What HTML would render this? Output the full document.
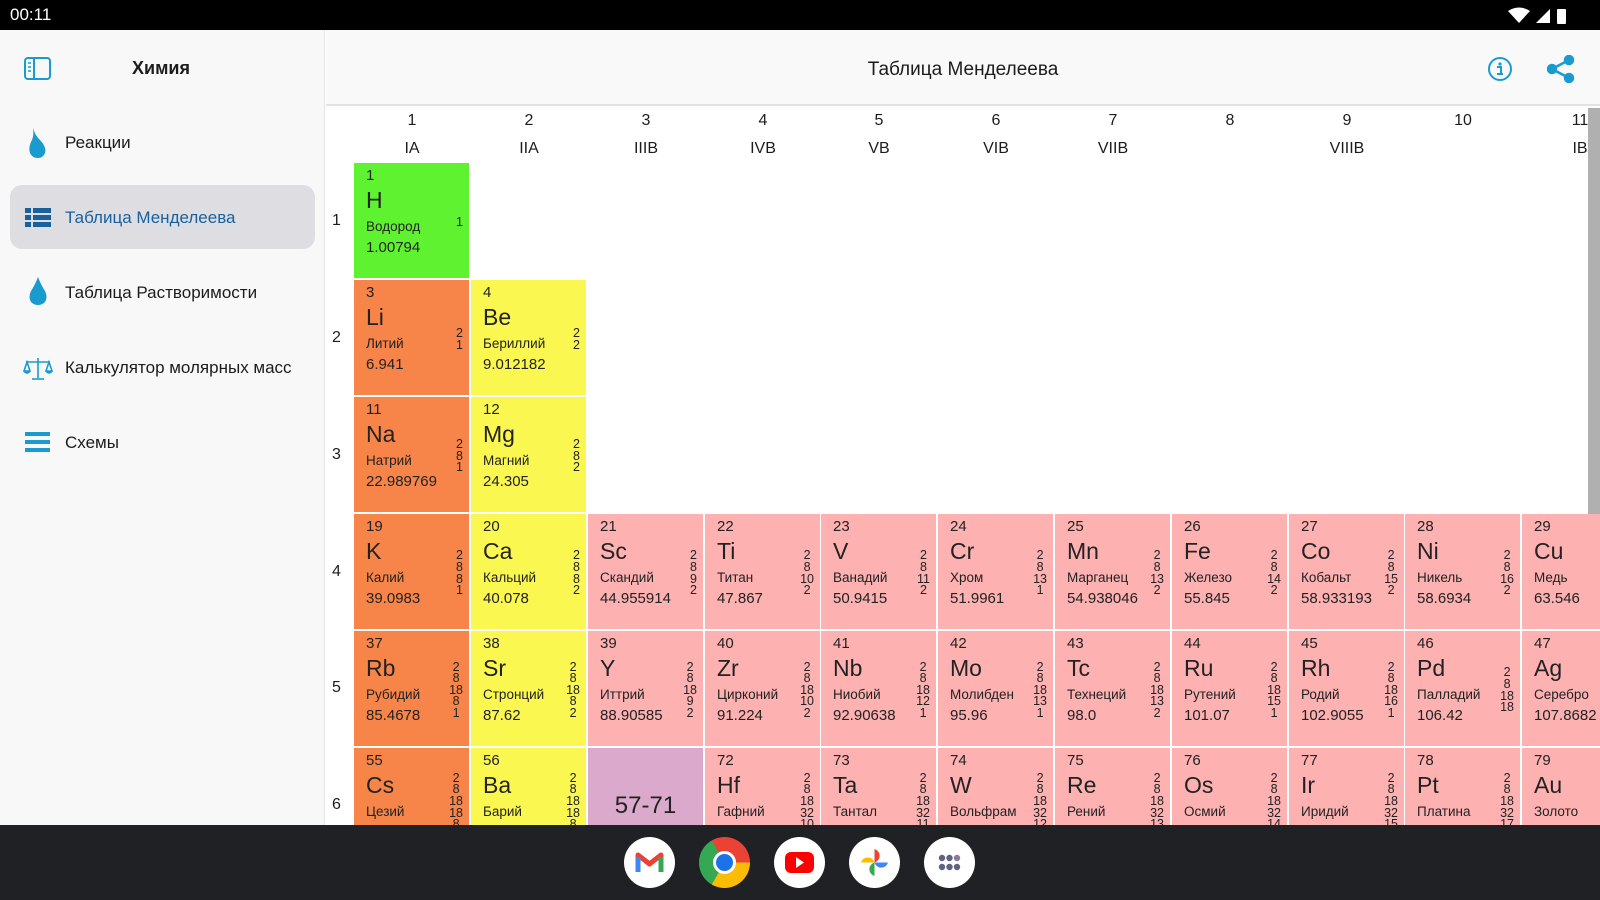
<!DOCTYPE html>
<html><head><meta charset="utf-8"><style>
*{margin:0;padding:0;box-sizing:border-box}
body{width:1600px;height:900px;position:relative;overflow:hidden;background:#fff;font-family:"Liberation Sans","DejaVu Sans",sans-serif;color:#1c1c1c}
.sb{position:absolute;top:0;left:0;width:1600px;height:30px;background:#000;color:#fff;font-size:17px}
.side{position:absolute;left:0;top:30px;width:325px;height:795px;background:#f8f8f8;border-right:1px solid #e4e4e4}
.top{position:absolute;left:326px;top:30px;width:1274px;height:76px;background:#f9f9f9;border-bottom:2px solid #e2e2e2}
.mi{position:absolute;left:65px;font-size:17px;color:#1c1c1c}
.main{position:absolute;left:326px;top:108px;width:1274px;height:717px;overflow:hidden;background:#fff}
.c{position:absolute;width:115px;height:115px;color:#222}
.c .n{position:absolute;left:12px;top:4px;font-size:15px}
.c .s{position:absolute;left:12px;top:24px;font-size:23px}
.c .m{position:absolute;left:12px;top:56px;font-size:13.5px}
.c .w{position:absolute;left:12px;top:76px;font-size:15px}
.c .e{position:absolute;right:6px;top:0;bottom:0;display:flex;flex-direction:column;justify-content:center;text-align:center;font-size:12.5px;line-height:11.6px;padding-top:4px}
.a{background:#f7854a}.b{background:#fbf751}.t{background:#fdb1b1}
.h{position:absolute;font-size:16px;text-align:center;width:116px}
.r{position:absolute;left:6px;font-size:16px}
.nav{position:absolute;left:0;top:825px;width:1600px;height:75px;background:#202124}
.ic{position:absolute;top:837px;width:51px;height:51px;border-radius:50%;background:#fff}
</style></head><body>
<div class="sb"><span style="position:absolute;left:10px;top:5px">00:11</span>
<svg style="position:absolute;left:1508px;top:7px" width="60" height="17"><path d="M0 4 Q11 -3 22 4 L11 16Z" fill="#fff"/><path d="M28 16 L42 2 L42 16Z" fill="#fff"/><rect x="49" y="2" width="9" height="15" rx="1" fill="#fff"/></svg></div>
<div class="side">
<svg style="position:absolute;left:24px;top:27px" width="27" height="23"><rect x="1" y="1" width="25" height="21" rx="3" fill="none" stroke="#1a9bd0" stroke-width="2"/><line x1="10" y1="1" x2="10" y2="22" stroke="#1a9bd0" stroke-width="2"/><line x1="4" y1="6" x2="7" y2="6" stroke="#1a9bd0" stroke-width="1.5"/><line x1="4" y1="10" x2="7" y2="10" stroke="#1a9bd0" stroke-width="1.5"/><line x1="4" y1="14" x2="7" y2="14" stroke="#1a9bd0" stroke-width="1.5"/></svg>
<div style="position:absolute;left:132px;top:28px;font-size:18px;font-weight:bold;color:#1c1c1c">Химия</div>
<svg style="position:absolute;left:27px;top:97px" width="22" height="32"><path d="M6 1 Q8 8 12 12 Q20 20 18 26 Q16 31 11 31 Q5 31 3 26 Q1 20 5 13 Q7 8 6 1Z" fill="#1a9bd0"/></svg>
<div class="mi" style="top:103px">Реакции</div>
<div style="position:absolute;left:10px;top:155px;width:305px;height:64px;background:#dedee2;border-radius:12px"></div>
<svg style="position:absolute;left:25px;top:178px" width="26" height="19" fill="#19609c"><rect x="0" y="0" width="6" height="5"/><rect x="8" y="0" width="18" height="5"/><rect x="0" y="7" width="6" height="5"/><rect x="8" y="7" width="18" height="5"/><rect x="0" y="14" width="6" height="5"/><rect x="8" y="14" width="18" height="5"/></svg>
<div class="mi" style="top:178px;color:#19609c">Таблица Менделеева</div>
<svg style="position:absolute;left:27px;top:246px" width="22" height="30"><path d="M11 1 Q14 9 18 15 Q21 21 18 26 Q15 29 11 29 Q7 29 4 26 Q1 21 4 15 Q8 9 11 1Z" fill="#1a9bd0"/></svg>
<div class="mi" style="top:253px">Таблица Растворимости</div>
<svg style="position:absolute;left:23px;top:327px" width="30" height="24" stroke="#1a9bd0" fill="none" stroke-width="1.6"><line x1="15" y1="1" x2="15" y2="21"/><line x1="3" y1="5" x2="27" y2="5"/><path d="M9 22 H21"/><path d="M1 14 L4 5 L7 14Z M23 14 L26 5 L29 14Z"/><path d="M1 14 Q4 18 7 14 M23 14 Q26 18 29 14" fill="#1a9bd0"/></svg>
<div class="mi" style="top:328px">Калькулятор молярных масс</div>
<svg style="position:absolute;left:25px;top:402px" width="25" height="21" fill="#1a9bd0"><rect y="0" width="25" height="4"/><rect y="8" width="25" height="4"/><rect y="16" width="25" height="4"/></svg>
<div class="mi" style="top:403px">Схемы</div>
</div>
<div class="top">
<div style="position:absolute;left:0;width:1274px;top:29px;text-align:center;font-size:19px;color:#1c1c1c">Таблица Менделеева</div>
<svg style="position:absolute;left:1161px;top:26px" width="26" height="26"><circle cx="13" cy="13" r="11" fill="none" stroke="#1a9bd0" stroke-width="2"/><circle cx="13" cy="8" r="1.6" fill="#1a9bd0"/><path d="M10 11 H14 V18 M10 18 H16" stroke="#1a9bd0" stroke-width="2" fill="none"/></svg>
<svg style="position:absolute;left:1221px;top:25px" width="28" height="28" fill="#1a9bd0" stroke="#1a9bd0" stroke-width="2.5"><line x1="5" y1="14" x2="22" y2="5"/><line x1="5" y1="14" x2="22" y2="23"/><circle cx="5" cy="14" r="4"/><circle cx="22" cy="5" r="4"/><circle cx="22" cy="23" r="4"/></svg>
</div>
<div class="main">
<div style="position:absolute;right:0;top:0;width:12px;height:420px;background:#b0b0b0"></div>
<div class="h" style="left:28px;top:4px">1</div><div class="h" style="left:28px;top:32px">IA</div>
<div class="h" style="left:145px;top:4px">2</div><div class="h" style="left:145px;top:32px">IIA</div>
<div class="h" style="left:262px;top:4px">3</div><div class="h" style="left:262px;top:32px">IIIB</div>
<div class="h" style="left:379px;top:4px">4</div><div class="h" style="left:379px;top:32px">IVB</div>
<div class="h" style="left:495px;top:4px">5</div><div class="h" style="left:495px;top:32px">VB</div>
<div class="h" style="left:612px;top:4px">6</div><div class="h" style="left:612px;top:32px">VIB</div>
<div class="h" style="left:729px;top:4px">7</div><div class="h" style="left:729px;top:32px">VIIB</div>
<div class="h" style="left:846px;top:4px">8</div>
<div class="h" style="left:963px;top:4px">9</div><div class="h" style="left:963px;top:32px">VIIIB</div>
<div class="h" style="left:1079px;top:4px">10</div>
<div class="h" style="left:1196px;top:4px">11</div><div class="h" style="left:1196px;top:32px">IB</div>
<div class="r" style="top:104px">1</div><div class="r" style="top:221px">2</div><div class="r" style="top:338px">3</div><div class="r" style="top:455px">4</div><div class="r" style="top:571px">5</div><div class="r" style="top:688px">6</div>

<div class="c" style="left:28px;top:55px;background:#5ef230"><span class="n">1</span><span class="s">H</span><span class="m">Водород</span><span class="w">1.00794</span><span class="e">1</span></div>

<div class="c a" style="left:28px;top:172px"><span class="n">3</span><span class="s">Li</span><span class="m">Литий</span><span class="w">6.941</span><span class="e">2<br>1</span></div>
<div class="c b" style="left:145px;top:172px"><span class="n">4</span><span class="s">Be</span><span class="m">Бериллий</span><span class="w">9.012182</span><span class="e">2<br>2</span></div>

<div class="c a" style="left:28px;top:289px"><span class="n">11</span><span class="s">Na</span><span class="m">Натрий</span><span class="w">22.989769</span><span class="e">2<br>8<br>1</span></div>
<div class="c b" style="left:145px;top:289px"><span class="n">12</span><span class="s">Mg</span><span class="m">Магний</span><span class="w">24.305</span><span class="e">2<br>8<br>2</span></div>

<div class="c a" style="left:28px;top:406px"><span class="n">19</span><span class="s">K</span><span class="m">Калий</span><span class="w">39.0983</span><span class="e">2<br>8<br>8<br>1</span></div>
<div class="c b" style="left:145px;top:406px"><span class="n">20</span><span class="s">Ca</span><span class="m">Кальций</span><span class="w">40.078</span><span class="e">2<br>8<br>8<br>2</span></div>
<div class="c t" style="left:262px;top:406px"><span class="n">21</span><span class="s">Sc</span><span class="m">Скандий</span><span class="w">44.955914</span><span class="e">2<br>8<br>9<br>2</span></div>
<div class="c t" style="left:379px;top:406px"><span class="n">22</span><span class="s">Ti</span><span class="m">Титан</span><span class="w">47.867</span><span class="e">2<br>8<br>10<br>2</span></div>
<div class="c t" style="left:495px;top:406px"><span class="n">23</span><span class="s">V</span><span class="m">Ванадий</span><span class="w">50.9415</span><span class="e">2<br>8<br>11<br>2</span></div>
<div class="c t" style="left:612px;top:406px"><span class="n">24</span><span class="s">Cr</span><span class="m">Хром</span><span class="w">51.9961</span><span class="e">2<br>8<br>13<br>1</span></div>
<div class="c t" style="left:729px;top:406px"><span class="n">25</span><span class="s">Mn</span><span class="m">Марганец</span><span class="w">54.938046</span><span class="e">2<br>8<br>13<br>2</span></div>
<div class="c t" style="left:846px;top:406px"><span class="n">26</span><span class="s">Fe</span><span class="m">Железо</span><span class="w">55.845</span><span class="e">2<br>8<br>14<br>2</span></div>
<div class="c t" style="left:963px;top:406px"><span class="n">27</span><span class="s">Co</span><span class="m">Кобальт</span><span class="w">58.933193</span><span class="e">2<br>8<br>15<br>2</span></div>
<div class="c t" style="left:1079px;top:406px"><span class="n">28</span><span class="s">Ni</span><span class="m">Никель</span><span class="w">58.6934</span><span class="e">2<br>8<br>16<br>2</span></div>
<div class="c t" style="left:1196px;top:406px"><span class="n">29</span><span class="s">Cu</span><span class="m">Медь</span><span class="w">63.546</span><span class="e">2<br>8<br>18<br>1</span></div>

<div class="c a" style="left:28px;top:523px"><span class="n">37</span><span class="s">Rb</span><span class="m">Рубидий</span><span class="w">85.4678</span><span class="e">2<br>8<br>18<br>8<br>1</span></div>
<div class="c b" style="left:145px;top:523px"><span class="n">38</span><span class="s">Sr</span><span class="m">Стронций</span><span class="w">87.62</span><span class="e">2<br>8<br>18<br>8<br>2</span></div>
<div class="c t" style="left:262px;top:523px"><span class="n">39</span><span class="s">Y</span><span class="m">Иттрий</span><span class="w">88.90585</span><span class="e">2<br>8<br>18<br>9<br>2</span></div>
<div class="c t" style="left:379px;top:523px"><span class="n">40</span><span class="s">Zr</span><span class="m">Цирконий</span><span class="w">91.224</span><span class="e">2<br>8<br>18<br>10<br>2</span></div>
<div class="c t" style="left:495px;top:523px"><span class="n">41</span><span class="s">Nb</span><span class="m">Ниобий</span><span class="w">92.90638</span><span class="e">2<br>8<br>18<br>12<br>1</span></div>
<div class="c t" style="left:612px;top:523px"><span class="n">42</span><span class="s">Mo</span><span class="m">Молибден</span><span class="w">95.96</span><span class="e">2<br>8<br>18<br>13<br>1</span></div>
<div class="c t" style="left:729px;top:523px"><span class="n">43</span><span class="s">Tc</span><span class="m">Технеций</span><span class="w">98.0</span><span class="e">2<br>8<br>18<br>13<br>2</span></div>
<div class="c t" style="left:846px;top:523px"><span class="n">44</span><span class="s">Ru</span><span class="m">Рутений</span><span class="w">101.07</span><span class="e">2<br>8<br>18<br>15<br>1</span></div>
<div class="c t" style="left:963px;top:523px"><span class="n">45</span><span class="s">Rh</span><span class="m">Родий</span><span class="w">102.9055</span><span class="e">2<br>8<br>18<br>16<br>1</span></div>
<div class="c t" style="left:1079px;top:523px"><span class="n">46</span><span class="s">Pd</span><span class="m">Палладий</span><span class="w">106.42</span><span class="e">2<br>8<br>18<br>18</span></div>
<div class="c t" style="left:1196px;top:523px"><span class="n">47</span><span class="s">Ag</span><span class="m">Серебро</span><span class="w">107.8682</span><span class="e">2<br>8<br>18<br>18<br>1</span></div>

<div class="c a" style="left:28px;top:640px"><span class="n">55</span><span class="s">Cs</span><span class="m">Цезий</span><span class="w">132.90545</span><span class="e">2<br>8<br>18<br>18<br>8<br>1</span></div>
<div class="c b" style="left:145px;top:640px"><span class="n">56</span><span class="s">Ba</span><span class="m">Барий</span><span class="w">137.327</span><span class="e">2<br>8<br>18<br>18<br>8<br>2</span></div>
<div class="c" style="left:262px;top:640px;background:#dba9cc"><span style="position:absolute;left:0;width:115px;text-align:center;top:44px;font-size:24px">57-71</span></div>
<div class="c t" style="left:379px;top:640px"><span class="n">72</span><span class="s">Hf</span><span class="m">Гафний</span><span class="w">178.49</span><span class="e">2<br>8<br>18<br>32<br>10<br>2</span></div>
<div class="c t" style="left:495px;top:640px"><span class="n">73</span><span class="s">Ta</span><span class="m">Тантал</span><span class="w">180.94788</span><span class="e">2<br>8<br>18<br>32<br>11<br>2</span></div>
<div class="c t" style="left:612px;top:640px"><span class="n">74</span><span class="s">W</span><span class="m">Вольфрам</span><span class="w">183.84</span><span class="e">2<br>8<br>18<br>32<br>12<br>2</span></div>
<div class="c t" style="left:729px;top:640px"><span class="n">75</span><span class="s">Re</span><span class="m">Рений</span><span class="w">186.207</span><span class="e">2<br>8<br>18<br>32<br>13<br>2</span></div>
<div class="c t" style="left:846px;top:640px"><span class="n">76</span><span class="s">Os</span><span class="m">Осмий</span><span class="w">190.23</span><span class="e">2<br>8<br>18<br>32<br>14<br>2</span></div>
<div class="c t" style="left:963px;top:640px"><span class="n">77</span><span class="s">Ir</span><span class="m">Иридий</span><span class="w">192.217</span><span class="e">2<br>8<br>18<br>32<br>15<br>2</span></div>
<div class="c t" style="left:1079px;top:640px"><span class="n">78</span><span class="s">Pt</span><span class="m">Платина</span><span class="w">195.084</span><span class="e">2<br>8<br>18<br>32<br>17<br>1</span></div>
<div class="c t" style="left:1196px;top:640px"><span class="n">79</span><span class="s">Au</span><span class="m">Золото</span><span class="w">196.966569</span><span class="e">2<br>8<br>18<br>32<br>18<br>1</span></div>
</div>
<div class="nav"></div>
<div class="ic" style="left:624px"><svg width="51" height="51"><path d="M14 35 V18 L25.5 27 L37 18 V35" fill="none" stroke="#ea4335" stroke-width="5" stroke-linejoin="round"/><path d="M14 20 V35" stroke="#4285f4" stroke-width="5"/><path d="M37 20 V35" stroke="#34a853" stroke-width="5"/></svg></div>
<div class="ic" style="left:699px;background:conic-gradient(from -30deg,#ea4335 0 120deg,#fbbc04 120deg 240deg,#34a853 240deg 360deg)"><div style="position:absolute;left:14px;top:14px;width:23px;height:23px;border-radius:50%;background:#fff"></div><div style="position:absolute;left:17px;top:17px;width:17px;height:17px;border-radius:50%;background:#1a73e8"></div></div>
<div class="ic" style="left:774px"><svg width="51" height="51"><rect x="11" y="15" width="29" height="21" rx="6" fill="#ff0000"/><path d="M22 20 L30 25.5 L22 31Z" fill="#fff"/></svg></div>
<div class="ic" style="left:849px"><svg width="51" height="51"><path d="M25.5 25.5 V12 A7 7 0 0 1 25.5 25.5Z" fill="#ea4335"/><path d="M25.5 25.5 H39 A7 7 0 0 1 25.5 25.5Z" fill="#4285f4"/><path d="M25.5 25.5 V39 A7 7 0 0 1 25.5 25.5Z" fill="#34a853"/><path d="M25.5 25.5 H12 A7 7 0 0 1 25.5 25.5Z" fill="#fbbc04"/></svg></div>
<div class="ic" style="left:924px"><svg width="51" height="51" fill="#5f6380"><circle cx="18" cy="21" r="3.2"/><circle cx="25.5" cy="21" r="3.2"/><circle cx="33" cy="21" r="3.2" fill="#8a7aa0"/><circle cx="18" cy="30" r="3.2"/><circle cx="25.5" cy="30" r="3.2"/><circle cx="33" cy="30" r="3.2"/></svg></div>
</body></html>
